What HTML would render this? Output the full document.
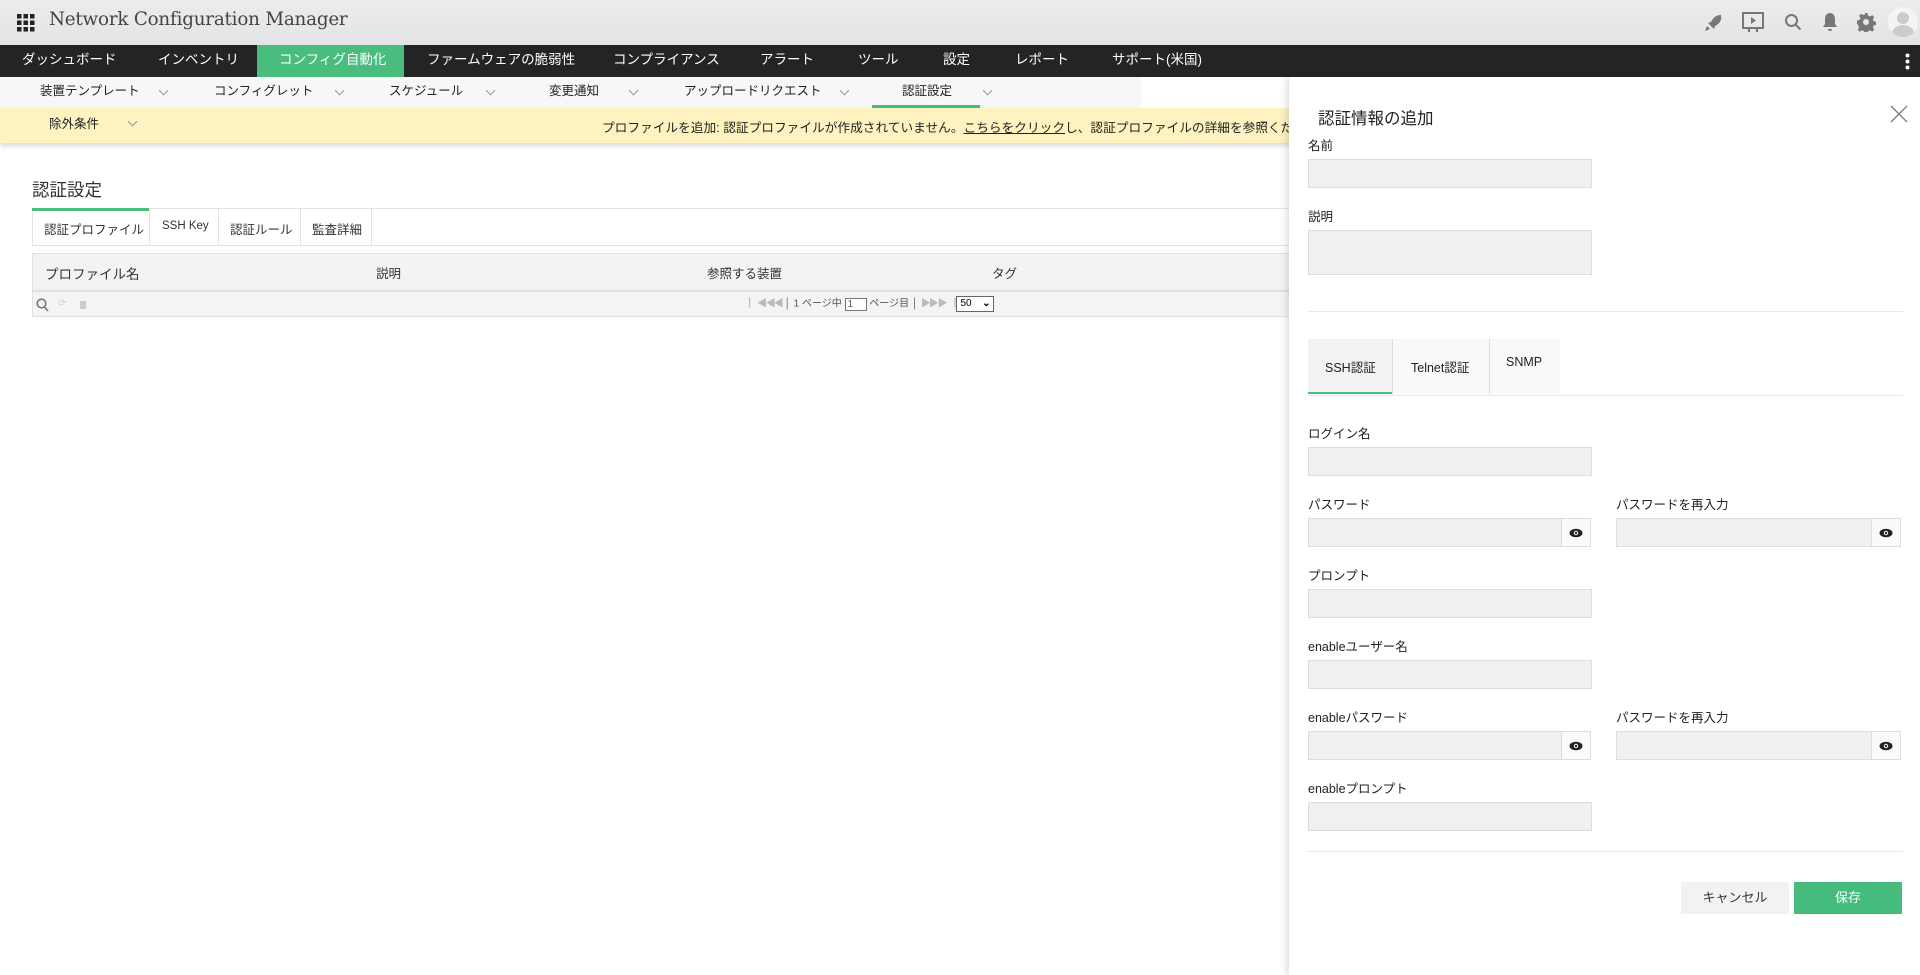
<!DOCTYPE html>
<html><head><meta charset="utf-8">
<style>
*{box-sizing:border-box;margin:0;padding:0}
body{width:1920px;height:975px;overflow:hidden;position:relative;background:#fff;font-family:"Liberation Sans","Noto Sans CJK JP",sans-serif;color:#333;font-size:13px}
.abs{position:absolute}
#hdr{left:0;top:0;width:1920px;height:45px;background:linear-gradient(#ececee,#e4e4e6)}
#nav{left:0;top:45px;width:1920px;height:32px;background:#242424}
#nav span{position:absolute;top:-1px;line-height:32px;color:#fff;font-size:13.5px;white-space:nowrap}
#sub{left:0;top:77px;width:1141px;height:31px;background:#f7f7f7}
#sub span{position:absolute;line-height:29px;font-size:12.5px;color:#222;white-space:nowrap}
#sub i,#yel i{position:absolute;width:7px;height:7px;border-right:1px solid #999;border-bottom:1px solid #999;transform:rotate(45deg)}
#sub i{top:10px}
#yel{left:0;top:108px;width:1920px;height:35px;background:#fdf2c0;box-shadow:0 3px 5px rgba(0,0,0,.15)}
.lbl{position:absolute;font-size:12.5px;color:#222}
.inp{position:absolute;background:#f0f0f0;border:1px solid #ddd}
.eye{position:absolute;background:#fafafa;border:1px solid #ddd;width:30px;display:flex;align-items:center;justify-content:center}
</style></head><body>
<div id="hdr" class="abs">
 <svg class="abs" style="left:17px;top:14px" width="18" height="18" viewBox="0 0 18 18" fill="#222"><rect x="0" y="0" width="4.5" height="4.5"/><rect x="6.5" y="0" width="4.5" height="4.5"/><rect x="13" y="0" width="4.5" height="4.5"/><rect x="0" y="6.5" width="4.5" height="4.5"/><rect x="6.5" y="6.5" width="4.5" height="4.5"/><rect x="13" y="6.5" width="4.5" height="4.5"/><rect x="0" y="13" width="4.5" height="4.5"/><rect x="6.5" y="13" width="4.5" height="4.5"/><rect x="13" y="13" width="4.5" height="4.5"/></svg>
 <div class="abs" style="left:49px;top:9px;font-family:'DejaVu Serif','Liberation Serif',serif;font-size:18.3px;color:#444;letter-spacing:-0.2px">Network Configuration Manager</div>
 <svg class="abs" style="left:1703px;top:13px" width="20" height="20" viewBox="0 0 20 20" fill="#777"><path d="M18 2c-5 0-8 3-10 7l-3 1 3 3 3 3 1-3c4-2 7-5 6-11zM4 13l-2 5 5-2z"/></svg>
 <svg class="abs" style="left:1741px;top:11px" width="24" height="22" viewBox="0 0 24 22" fill="none" stroke="#777" stroke-width="2"><rect x="2" y="2" width="20" height="15"/><path d="M10 6l5 3.5-5 3.5z" fill="#777" stroke="none"/><path d="M8 17v4M16 17v4"/></svg>
 <svg class="abs" style="left:1784px;top:13px" width="18" height="18" viewBox="0 0 18 18" fill="none" stroke="#777" stroke-width="2"><circle cx="7.5" cy="7.5" r="5.5"/><path d="M11.5 11.5l5 5"/></svg>
 <svg class="abs" style="left:1822px;top:12px" width="16" height="20" viewBox="0 0 16 20" fill="#777"><path d="M8 1c-3 0-5 2.5-5 6v5l-2 3h14l-2-3V7c0-3.5-2-6-5-6zM6 17h4a2 2 0 0 1-4 0z"/></svg>
 <svg class="abs" style="left:1856px;top:12px" width="20" height="20" viewBox="0 0 20 20" fill="#777"><path d="M8.5 1h3l.5 2.5 2 1 2.2-1.4 2.1 2.1-1.4 2.2 1 2 2.6.5v3l-2.6.5-1 2 1.4 2.2-2.1 2.1-2.2-1.4-2 1-.5 2.5h-3l-.5-2.5-2-1-2.2 1.4-2.1-2.1 1.4-2.2-1-2L1 11.5v-3l2.5-.5 1-2-1.4-2.2 2.1-2.1 2.2 1.4 2-1z"/><circle cx="10" cy="10" r="3" fill="#e8e8ea"/></svg>
 <div class="abs" style="left:1888px;top:7px;width:30px;height:30px;border-radius:50%;background:#f4f4f4;overflow:hidden"><div class="abs" style="left:9px;top:5px;width:12px;height:12px;border-radius:50%;background:#ccc"></div><div class="abs" style="left:4px;top:18px;width:22px;height:16px;border-radius:50%;background:#ccc"></div></div>
</div>
<div id="nav" class="abs">
 <div class="abs" style="left:257px;top:0;width:147px;height:32px;background:#48bd7e"></div>
 <span style="left:22px">ダッシュボード</span><span style="left:158px">インベントリ</span><span style="left:279px">コンフィグ自動化</span><span style="left:427px">ファームウェアの脆弱性</span><span style="left:613px">コンプライアンス</span><span style="left:760px">アラート</span><span style="left:858px">ツール</span><span style="left:943px">設定</span><span style="left:1015px">レポート</span><span style="left:1112px">サポート(米国)</span>
 <svg class="abs" style="left:1905px;top:8px" width="5" height="17" viewBox="0 0 5 17" fill="#fff"><circle cx="2.5" cy="2.5" r="2"/><circle cx="2.5" cy="8.5" r="2"/><circle cx="2.5" cy="14.5" r="2"/></svg>
</div>
<div id="sub" class="abs">
 <span style="left:40px">装置テンプレート</span><i style="left:160px"></i>
 <span style="left:214px">コンフィグレット</span><i style="left:336px"></i>
 <span style="left:389px">スケジュール</span><i style="left:487px"></i>
 <span style="left:549px">変更通知</span><i style="left:630px"></i>
 <span style="left:684px">アップロードリクエスト</span><i style="left:841px"></i>
 <span style="left:902px">認証設定</span><i style="left:984px"></i>
 <div class="abs" style="left:872px;top:28px;width:108px;height:3px;background:#48bd7e"></div>
</div>
<div id="yel" class="abs">
 <span class="abs" style="left:49px;top:5px;font-size:12.5px;color:#222">除外条件</span><i style="left:129px;top:10px"></i>
 <span class="abs" style="left:602px;top:9px;font-size:12.7px;color:#222;white-space:nowrap">プロファイルを追加: 認証プロファイルが作成されていません。<u>こちらをクリック</u>し、認証プロファイルの詳細を参照ください。</span>
</div>
<div class="abs" style="left:32px;top:177px;font-size:17.5px;color:#333">認証設定</div>
<div class="abs" style="left:32px;top:208px;width:1300px;height:38px;border:1px solid #e2e2e2"></div>
<div class="abs" style="left:32px;top:208px;width:117px;height:3px;background:#48bd7e"></div>
<div class="abs" style="left:149px;top:208px;width:1px;height:38px;background:#e2e2e2"></div>
<div class="abs" style="left:218px;top:208px;width:1px;height:38px;background:#e2e2e2"></div>
<div class="abs" style="left:300px;top:208px;width:1px;height:38px;background:#e2e2e2"></div>
<div class="abs" style="left:371px;top:208px;width:1px;height:38px;background:#e2e2e2"></div>
<span class="abs" style="left:44px;top:219px;font-size:12.5px">認証プロファイル</span>
<span class="abs" style="left:162px;top:220px;font-size:11.5px">SSH Key</span>
<span class="abs" style="left:230px;top:219px;font-size:12.5px">認証ルール</span>
<span class="abs" style="left:312px;top:219px;font-size:12.5px">監査詳細</span>
<div class="abs" style="left:32px;top:253px;width:1300px;height:39px;background:#f3f3f4;border:1px solid #e2e2e2;border-bottom:2px solid #e0e0e0"></div>
<span class="abs" style="left:45px;top:263px;font-size:13.5px">プロファイル名</span>
<span class="abs" style="left:376px;top:263px;font-size:12.5px">説明</span>
<span class="abs" style="left:707px;top:263px;font-size:12.5px">参照する装置</span>
<span class="abs" style="left:992px;top:263px;font-size:12.5px">タグ</span>
<div class="abs" style="left:32px;top:292px;width:1300px;height:25px;background:#f4f4f5;border:1px solid #e2e2e2;border-top:none"></div>
<svg class="abs" style="left:36px;top:298px" width="13" height="14" viewBox="0 0 13 14" fill="none" stroke="#777" stroke-width="1.6"><circle cx="5.5" cy="5.5" r="4.3"/><path d="M8.5 9l3.5 4"/></svg>
<span class="abs" style="left:58px;top:298px;font-size:10px;color:#ccc">⟳</span>
<div class="abs" style="left:80px;top:301px;width:6px;height:8px;background:#ccc"></div>
<div class="abs" style="left:749px;top:296px;font-size:10px;color:#555;white-space:nowrap;line-height:16px"><span style="color:#bbb;letter-spacing:-2px">▏◀ ◀◀</span> │ 1 ページ中 <span style="display:inline-block;width:22px;height:13px;border:1px solid #777;vertical-align:middle;background:#fff;font-size:10px;line-height:11px;padding-left:2px">1</span> ページ目 │ <span style="color:#bbb;letter-spacing:-2px">▶▶ ▶▕</span> <span style="display:inline-block;width:38px;height:16px;border:1px solid #666;vertical-align:middle;background:#fff;font-size:10px;line-height:14px;padding-left:3px;color:#000">50 <b style="float:right;margin-right:3px">⌄</b></span></div>

<div class="abs" style="left:1289px;top:77px;width:631px;height:898px;background:#fff;box-shadow:-3px 0 6px rgba(0,0,0,.12)"></div>
<div class="abs" style="left:1318px;top:105px;font-size:16.5px;color:#222">認証情報の追加</div>
<svg class="abs" style="left:1890px;top:105px" width="18" height="18" viewBox="0 0 18 18" stroke="#777" stroke-width="1.3"><path d="M1 1l16 16M17 1L1 17"/></svg>
<span class="lbl" style="left:1308px;top:135px">名前</span>
<div class="inp" style="left:1308px;top:159px;width:284px;height:29px"></div>
<span class="lbl" style="left:1308px;top:206px">説明</span>
<div class="inp" style="left:1308px;top:230px;width:284px;height:45px"></div>
<div class="abs" style="left:1308px;top:311px;width:595px;height:1px;background:#e8e8e8"></div>
<div class="abs" style="left:1308px;top:339px;width:84px;height:55px;background:#f2f2f4;border-bottom:2px solid #48bd7e"></div>
<div class="abs" style="left:1392px;top:339px;width:97px;height:55px;background:#f9f9f9;border-left:1px solid #ddd"></div>
<div class="abs" style="left:1489px;top:339px;width:71px;height:55px;background:#f9f9f9;border-left:1px solid #ddd"></div>
<div class="abs" style="left:1308px;top:395px;width:595px;height:1px;background:#e8e8e8"></div>
<span class="lbl" style="left:1325px;top:357px">SSH認証</span>
<span class="lbl" style="left:1411px;top:357px">Telnet認証</span>
<span class="lbl" style="left:1506px;top:355px">SNMP</span>
<span class="lbl" style="left:1308px;top:423px">ログイン名</span>
<div class="inp" style="left:1308px;top:447px;width:284px;height:29px"></div>
<span class="lbl" style="left:1308px;top:494px">パスワード</span>
<div class="inp" style="left:1308px;top:518px;width:254px;height:29px"></div>
<div class="eye" style="left:1561px;top:518px;height:29px"><svg width="14" height="10" viewBox="0 0 14 10"><ellipse cx="7" cy="5" rx="6.5" ry="4.3" fill="#222"/><circle cx="7" cy="5" r="2.2" fill="#fff"/><circle cx="7" cy="5" r="1.2" fill="#222"/></svg></div>
<span class="lbl" style="left:1616px;top:494px">パスワードを再入力</span>
<div class="inp" style="left:1616px;top:518px;width:256px;height:29px"></div>
<div class="eye" style="left:1871px;top:518px;height:29px"><svg width="14" height="10" viewBox="0 0 14 10"><ellipse cx="7" cy="5" rx="6.5" ry="4.3" fill="#222"/><circle cx="7" cy="5" r="2.2" fill="#fff"/><circle cx="7" cy="5" r="1.2" fill="#222"/></svg></div>
<span class="lbl" style="left:1308px;top:565px">プロンプト</span>
<div class="inp" style="left:1308px;top:589px;width:284px;height:29px"></div>
<span class="lbl" style="left:1308px;top:636px">enableユーザー名</span>
<div class="inp" style="left:1308px;top:660px;width:284px;height:29px"></div>
<span class="lbl" style="left:1308px;top:707px">enableパスワード</span>
<div class="inp" style="left:1308px;top:731px;width:254px;height:29px"></div>
<div class="eye" style="left:1561px;top:731px;height:29px"><svg width="14" height="10" viewBox="0 0 14 10"><ellipse cx="7" cy="5" rx="6.5" ry="4.3" fill="#222"/><circle cx="7" cy="5" r="2.2" fill="#fff"/><circle cx="7" cy="5" r="1.2" fill="#222"/></svg></div>
<span class="lbl" style="left:1616px;top:707px">パスワードを再入力</span>
<div class="inp" style="left:1616px;top:731px;width:256px;height:29px"></div>
<div class="eye" style="left:1871px;top:731px;height:29px"><svg width="14" height="10" viewBox="0 0 14 10"><ellipse cx="7" cy="5" rx="6.5" ry="4.3" fill="#222"/><circle cx="7" cy="5" r="2.2" fill="#fff"/><circle cx="7" cy="5" r="1.2" fill="#222"/></svg></div>
<span class="lbl" style="left:1308px;top:778px">enableプロンプト</span>
<div class="inp" style="left:1308px;top:802px;width:284px;height:29px"></div>
<div class="abs" style="left:1308px;top:851px;width:595px;height:1px;background:#e8e8e8"></div>
<div class="abs" style="left:1681px;top:882px;width:108px;height:32px;background:#f2f2f2;text-align:center;line-height:32px;font-size:13px;color:#333">キャンセル</div>
<div class="abs" style="left:1794px;top:882px;width:108px;height:32px;background:#45bc7e;text-align:center;line-height:32px;font-size:13px;color:#fff">保存</div>
</body></html>
